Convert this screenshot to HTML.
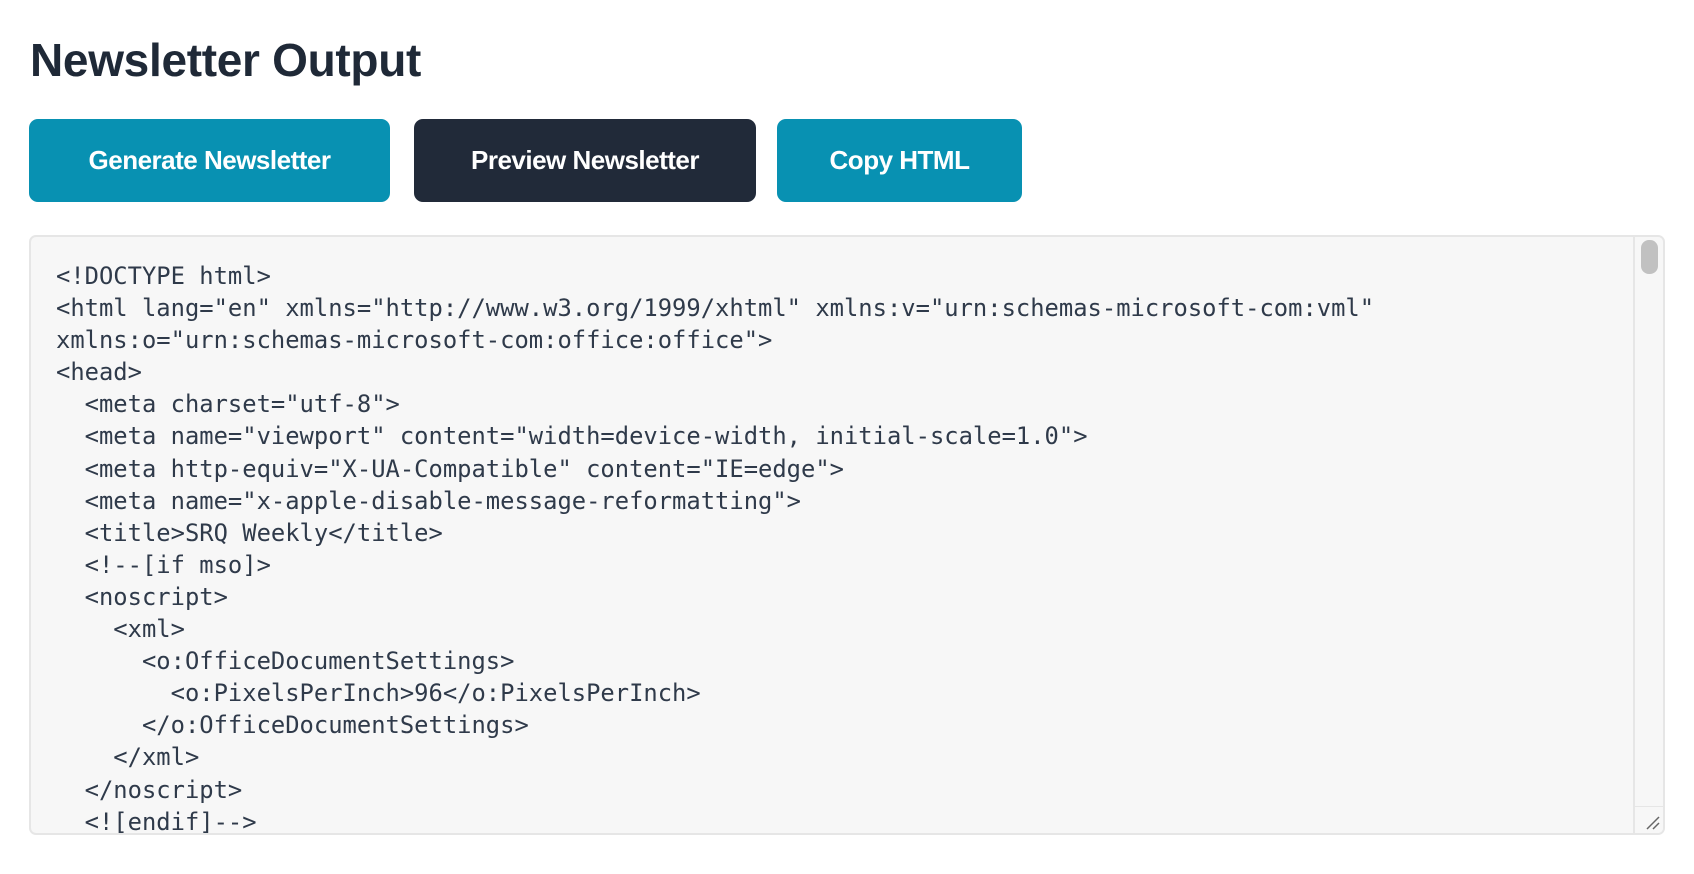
<!DOCTYPE html>
<html><head><style>
body{margin:0;background:#fff;width:1694px;height:874px;overflow:hidden;font-family:"Liberation Sans",sans-serif;}
h1{position:absolute;left:30px;top:-5px;margin:0;font-size:46px;font-weight:bold;color:#1f2937;line-height:1;padding-top:42px;letter-spacing:-0.3px;}
.btn{position:absolute;top:119px;height:83px;border-radius:9px;color:#fff;font-weight:bold;font-size:26px;display:flex;align-items:center;justify-content:center;letter-spacing:-0.5px;}
.t{background:#0891b2}.d{background:#212a39}
.ta{position:absolute;left:29px;top:235px;width:1632px;height:596px;background:#f7f7f7;border:2px solid #e6e6e6;border-radius:7px;overflow:hidden;}
pre{margin:0;position:absolute;left:25px;top:23px;font-family:"DejaVu Sans Mono","Liberation Mono",monospace;font-size:23.8px;line-height:32.1px;color:#2f3a4a;}
.sb{position:absolute;right:0;top:0;width:28px;height:100%;border-left:2px solid #e6e6e6;background:#f7f7f7;}
.th{position:absolute;left:6px;top:3px;width:17px;height:34px;border-radius:8px;background:#c1c1c1;}
.rz{position:absolute;right:0;bottom:0;width:28px;height:26px;border-top:1px solid #e6e6e6;background:#f7f7f7}
</style></head><body>
<h1>Newsletter Output</h1>
<div class="btn t" style="left:29px;width:361px">Generate Newsletter</div>
<div class="btn d" style="left:414px;width:342px">Preview Newsletter</div>
<div class="btn t" style="left:777px;width:245px">Copy HTML</div>
<div class="ta"><pre>&lt;!DOCTYPE html&gt;
&lt;html lang="en" xmlns="http://www.w3.org/1999/xhtml" xmlns:v="urn:schemas-microsoft-com:vml"
xmlns:o="urn:schemas-microsoft-com:office:office"&gt;
&lt;head&gt;
  &lt;meta charset="utf-8"&gt;
  &lt;meta name="viewport" content="width=device-width, initial-scale=1.0"&gt;
  &lt;meta http-equiv="X-UA-Compatible" content="IE=edge"&gt;
  &lt;meta name="x-apple-disable-message-reformatting"&gt;
  &lt;title&gt;SRQ Weekly&lt;/title&gt;
  &lt;!--[if mso]&gt;
  &lt;noscript&gt;
    &lt;xml&gt;
      &lt;o:OfficeDocumentSettings&gt;
        &lt;o:PixelsPerInch&gt;96&lt;/o:PixelsPerInch&gt;
      &lt;/o:OfficeDocumentSettings&gt;
    &lt;/xml&gt;
  &lt;/noscript&gt;
  &lt;![endif]--&gt;
</pre>
<div class="sb"><div class="th"></div><div class="rz"><svg width="28" height="26"><path d="M12 22 L24 10 M18 22 L24 16" stroke="#666" stroke-width="1.5"/></svg></div></div>
</div>
</body></html>
